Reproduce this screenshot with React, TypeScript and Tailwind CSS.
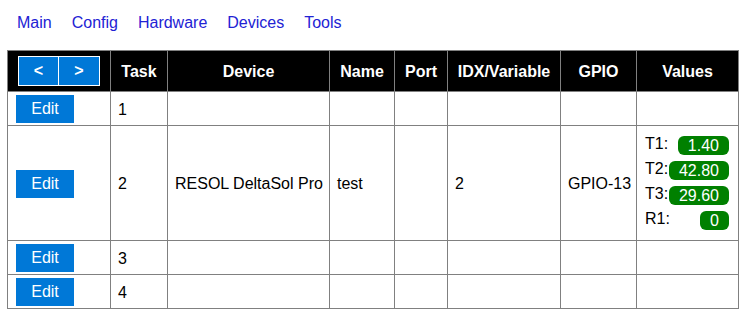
const navItems = ["Main", "Config", "Hardware", "Devices", "Tools"];

const columns = [
    {label: "Task", width: "w-[57px]"},
    {label: "Device", width: "w-[162px]"},
    {label: "Name", width: "w-[65px]"},
    {label: "Port", width: "w-[53px]"},
    {label: "IDX/Variable", width: "w-[113px]"},
    {label: "GPIO", width: "w-[76px]"},
    {label: "Values", width: "w-[102px]"},
];

type Task = {
    nr: number;
    device?: string;
    name?: string;
    idx?: string;
    gpio?: string;
    values?: {label: string; value: string}[];
};

const tasks: Task[] = [
    {nr: 1},
    {
        nr: 2,
        device: "RESOL DeltaSol Pro",
        name: "test",
        idx: "2",
        gpio: "GPIO-13",
        values: [
            {label: "T1:", value: "1.40"},
            {label: "T2:", value: "42.80"},
            {label: "T3:", value: "29.60"},
            {label: "R1:", value: "0"},
        ],
    },
    {nr: 3},
    {nr: 4},
];

function EditButton() {
    return (
        <button className="w-[58px] h-[28px] bg-[#0078d7] text-white text-[16px] leading-[28px]">
            Edit
        </button>
    );
}

export default function App() {
    return (
        <div className="w-[755px] h-[329px] bg-white text-black text-[16px]" style={{fontFamily: '"Liberation Sans", Arial, sans-serif'}}>
            <nav className="flex pl-[7px] pt-[14px] h-[50px]">
                {navItems.map((item) => (
                    <a key={item} className="px-[10px] text-[#2222d4] leading-[18px] cursor-pointer">
                        {item}
                    </a>
                ))}
            </nav>

            <table className="ml-[7px] w-[731px] border-collapse table-fixed">
                <thead>
                    <tr className="h-[41px] bg-black text-white font-bold">
                        <th className="w-[103px] border border-[#808080] px-0">
                            <div className="flex ml-[10px]">
                                <button className="w-[41px] h-[30px] bg-[#0078d7] border border-white font-bold leading-[26px]">&lt;</button>
                                <button className="w-[41px] h-[30px] bg-[#0078d7] border border-white border-l-0 font-bold leading-[26px]">&gt;</button>
                            </div>
                        </th>
                        {columns.map((c) => (
                            <th key={c.label} className={`${c.width} border border-[#808080] text-center pt-[1px]`}>
                                {c.label}
                            </th>
                        ))}
                    </tr>
                </thead>
                <tbody className="whitespace-nowrap">
                    {tasks.map((t) => (
                        <tr key={t.nr} className={t.values ? "" : "h-[34px]"}>
                            <td className="border border-[#808080] pl-[8px] pt-[2px] pb-[1px] align-middle">
                                <EditButton/>
                            </td>
                            <td className="border border-[#808080] px-[7px] pt-[2px]">{t.nr}</td>
                            <td className="border border-[#808080] px-[7px] pt-[2px]">{t.device}</td>
                            <td className="border border-[#808080] px-[7px] pt-[2px]">{t.name}</td>
                            <td className="border border-[#808080] px-[7px]"></td>
                            <td className="border border-[#808080] px-[7px] pt-[2px]">{t.idx}</td>
                            <td className="border border-[#808080] px-[7px] pt-[2px]">{t.gpio}</td>
                            <td className="border border-[#808080] pl-[8px] pr-[9px] py-[7px]">
                                {t.values && (
                                    <div className="flex flex-col">
                                        {t.values.map((v) => (
                                            <div key={v.label} className="flex h-[25px] items-center justify-between">
                                                <span className="leading-[18px] -mt-[4px]">{v.label}</span>
                                                <span className="h-[19px] px-[10px] rounded-[6px] bg-[#008000] text-white leading-[20px]">
                                                    {v.value}
                                                </span>
                                            </div>
                                        ))}
                                    </div>
                                )}
                            </td>
                        </tr>
                    ))}
                </tbody>
            </table>
        </div>
    );
}
